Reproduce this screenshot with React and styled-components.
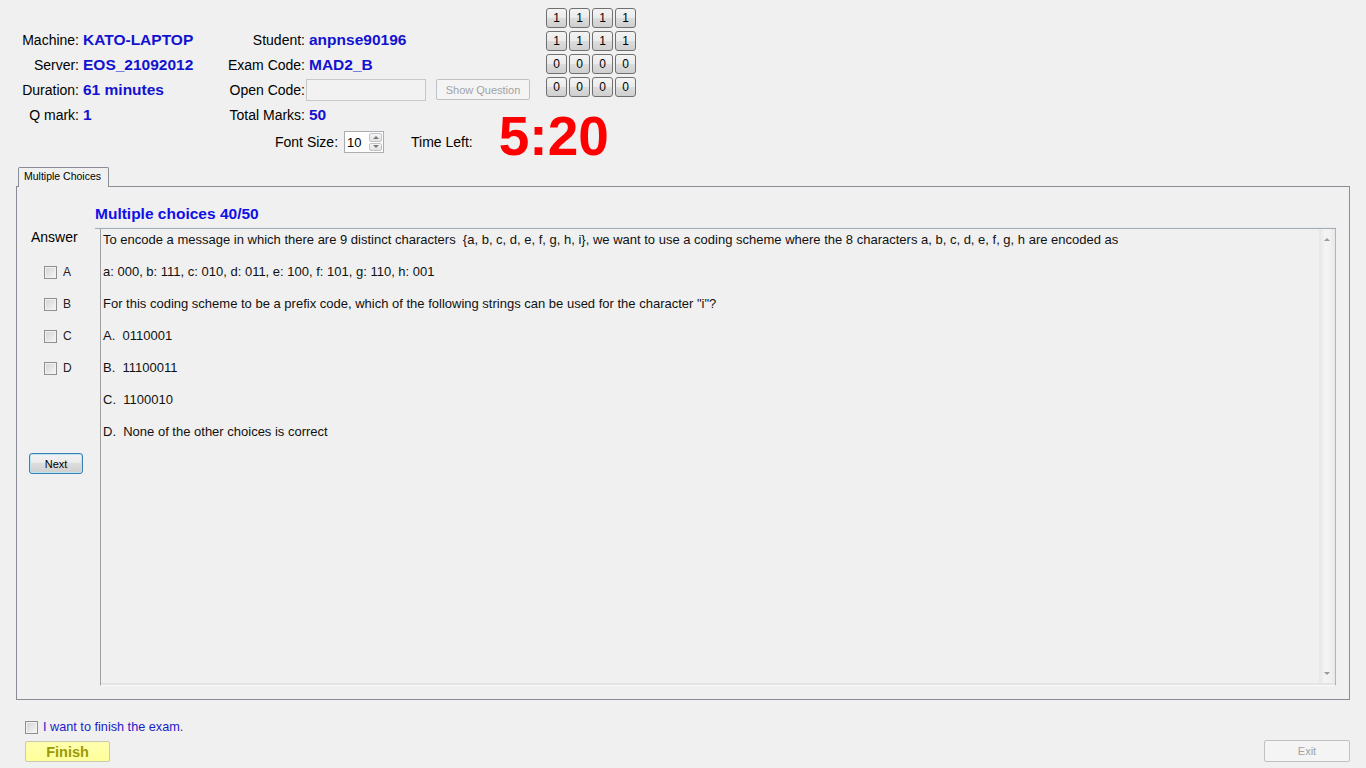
import React from "react";
import styled, { createGlobalStyle } from "styled-components";

const GlobalStyle = createGlobalStyle`
  html, body {
    margin: 0;
    padding: 0;
    background: #f0f0f0;
  }
  body {
    font-family: "Liberation Sans", Arial, sans-serif;
    color: #000;
  }
  * {
    box-sizing: border-box;
  }
`;

const Page = styled.div`
  width: 1366px;
  height: 768px;
  overflow: hidden;
  display: flex;
  flex-direction: column;
`;

/* ---------- header ---------- */

const Header = styled.div`
  display: grid;
  grid-template-columns: 546px 90px;
  grid-template-rows: 128px 28px;
  height: 166px;
`;

const InfoGrid = styled.div`
  margin-top: 27px;
  display: grid;
  grid-template-columns: 79px 142px 84px 1fr;
  grid-auto-rows: 25px;
  align-items: center;
`;

const Label = styled.div`
  text-align: right;
  font-size: 14px;
  white-space: nowrap;
`;

const Value = styled.div`
  display: flex;
  align-items: center;
  gap: 10px;
  padding-left: ${(p) => (p.$tight ? 1 : 4)}px;
  font-size: 15.5px;
  font-weight: bold;
  color: #1212d0;
  white-space: nowrap;
`;

const CodeInput = styled.div`
  width: 120px;
  height: 22px;
  border: 1px solid #c6c8cc;
  background: #f2f2f2;
`;

const GreyButton = styled.div`
  width: ${(p) => p.$w}px;
  height: ${(p) => p.$h || 21}px;
  border: 1px solid #bfc2c5;
  border-radius: 2px;
  background: #f4f4f4;
  color: #a3a3a3;
  font-size: 11px;
  font-weight: normal;
  display: flex;
  align-items: center;
  justify-content: center;
`;

const Matrix = styled.div`
  margin-top: 8px;
  display: grid;
  grid-template-columns: repeat(4, 21px);
  grid-auto-rows: 20px;
  column-gap: 2px;
  row-gap: 3px;
  align-self: start;
`;

const Cell = styled.div`
  border: 1px solid #707070;
  border-radius: 3px;
  background: linear-gradient(#f3f3f3, #ebebeb 50%, #dddddd 50%, #cfcfcf);
  font-size: 12px;
  display: flex;
  align-items: center;
  justify-content: center;
`;

const ControlRow = styled.div`
  grid-column: 1 / span 2;
  display: flex;
  align-items: center;
  padding-left: 275px;
`;

const Spinner = styled.div`
  margin-left: 6px;
  width: 40px;
  height: 22px;
  border: 1px solid #abadb3;
  background: #fff;
  display: flex;
  font-size: 13px;
`;

const SpinValue = styled.div`
  flex: 1;
  padding-left: 2px;
  display: flex;
  align-items: center;
`;

const SpinButtons = styled.div`
  width: 15px;
  display: flex;
  flex-direction: column;
  gap: 1px;
  padding: 1px;
`;

const SpinButton = styled.div`
  flex: 1;
  border: 1px solid #c2c4c8;
  border-radius: 2px;
  background: linear-gradient(#f6f6f6, #e2e2e2);
  display: flex;
  align-items: center;
  justify-content: center;
`;

const Arrow = styled.span`
  width: 0;
  height: 0;
  border-left: 3px solid transparent;
  border-right: 3px solid transparent;
  ${(p) =>
    p.$down
      ? `border-top: 3px solid ${p.$color || "#5a5a5a"};`
      : `border-bottom: 3px solid ${p.$color || "#5a5a5a"};`}
`;

const TimeLabel = styled.div`
  margin-left: 27px;
  font-size: 14px;
`;

const Timer = styled.div`
  margin-left: 26px;
  margin-bottom: 12px;
  font-size: 55px;
  line-height: 55px;
  font-weight: bold;
  color: #ff0000;
`;

/* ---------- tab panel ---------- */

const TabArea = styled.div`
  margin: 0 16px;
  display: flex;
  flex-direction: column;
`;

const TabStrip = styled.div`
  height: 20px;
  padding-left: 2px;
  display: flex;
  align-items: flex-end;
`;

const Tab = styled.div`
  position: relative;
  z-index: 1;
  width: 91px;
  height: 20px;
  margin-bottom: -1px;
  padding: 2px 0 0 5px;
  border: 1px solid #898c95;
  border-bottom: none;
  border-radius: 2px 2px 0 0;
  background: #f0f0f0;
  font-size: 10.5px;
  line-height: 13px;
`;

const Panel = styled.div`
  height: 514px;
  border: 1px solid #898c95;
  background: #f0f0f0;
  display: flex;
  flex-direction: column;
  padding: 18px 13px 0 0;
`;

const Heading = styled.div`
  margin-left: 78px;
  padding-bottom: 5px;
  line-height: 18px;
  font-size: 15.5px;
  font-weight: bold;
  color: #0f0fe6;
  border-bottom: 1px solid #a7abb0;
  box-shadow: 0 -2px 0 -1px #e3ecf5 inset;
`;

const Body = styled.div`
  height: 457px;
  display: flex;
`;

const LeftCol = styled.div`
  width: 83px;
  padding-left: 12px;
  display: flex;
  flex-direction: column;
  align-items: flex-start;
`;

const AnswerLabel = styled.div`
  margin-left: 2px;
  font-size: 14px;
  line-height: 16px;
`;

const Options = styled.div`
  margin-top: 11px;
  padding-left: 15px;
`;

const Option = styled.label`
  height: 32px;
  display: flex;
  align-items: center;
  gap: 6px;
  font-size: 12px;
  color: #222;
`;

const Box = styled.span`
  width: 13px;
  height: 13px;
  border: 1px solid #8f8f8f;
  background: linear-gradient(135deg, #d2d2d2, #f7f7f7);
  box-shadow: inset 0 0 0 1px #f2f2f2;
  flex-shrink: 0;
`;

const NextButton = styled.div`
  margin-top: 69px;
  width: 54px;
  height: 21px;
  border: 1px solid #3c7fb1;
  border-radius: 3px;
  background: linear-gradient(#f2f2f2, #ebebeb 50%, #dddddd 50%, #cfcfcf);
  box-shadow: inset 0 0 0 1px #b9e3f7;
  font-size: 11px;
  display: flex;
  align-items: center;
  justify-content: center;
`;

const TextBox = styled.div`
  flex: 1;
  display: flex;
  border-left: 1px solid #a0a0a0;
  border-right: 1px solid #b4b4b4;
  border-bottom: 1px solid #fafafa;
  box-shadow: inset 0 -2px 0 #e4e4e4;
`;

const Content = styled.div`
  flex: 1;
  padding: 3px 0 0 2px;
  font-size: 13px;
  line-height: 16px;
  color: #111;

  p {
    margin: 0 0 16px;
    white-space: pre;
  }
`;

const ScrollBar = styled.div`
  width: 16px;
  margin-bottom: 2px;
  background: linear-gradient(to right, #e6e6e6, #f4f4f4 40%, #f1f1f1 70%, #e8e8e8);
  display: flex;
  flex-direction: column;
  justify-content: space-between;
  align-items: center;
  padding: 9px 0 8px;
`;

/* ---------- footer ---------- */

const CheckRow = styled.label`
  margin-top: 19px;
  height: 16px;
  padding-left: 25px;
  display: flex;
  align-items: center;
  gap: 5px;
  font-size: 12.7px;
  color: #1c1cc8;
`;

const ButtonRow = styled.div`
  margin-top: 5px;
  padding: 0 16px 0 25px;
  display: flex;
  justify-content: space-between;
  align-items: flex-end;
`;

const FinishButton = styled.div`
  width: 85px;
  height: 21px;
  border: 1px solid #c9c9b4;
  border-radius: 2px;
  background: linear-gradient(#ffffb0, #ffff99);
  color: #9a9a06;
  font-size: 14.5px;
  font-weight: bold;
  display: flex;
  align-items: center;
  justify-content: center;
`;

const info = [
  ["Machine:", "KATO-LAPTOP", "Student:", "anpnse90196"],
  ["Server:", "EOS_21092012", "Exam Code:", "MAD2_B"],
  ["Duration:", "61 minutes", "Open Code:", null],
  ["Q mark:", "1", "Total Marks:", "50"],
];

const matrix = [
  [1, 1, 1, 1],
  [1, 1, 1, 1],
  [0, 0, 0, 0],
  [0, 0, 0, 0],
];

const question = [
  "To encode a message in which there are 9 distinct characters  {a, b, c, d, e, f, g, h, i}, we want to use a coding scheme where the 8 characters a, b, c, d, e, f, g, h are encoded as",
  "a: 000, b: 111, c: 010, d: 011, e: 100, f: 101, g: 110, h: 001",
  'For this coding scheme to be a prefix code, which of the following strings can be used for the character "i"?',
  "A.  0110001",
  "B.  11100011",
  "C.  1100010",
  "D.  None of the other choices is correct",
];

export default function App() {
  return (
    <Page>
      <GlobalStyle />
      <Header>
        <InfoGrid>
          {info.map(([l1, v1, l2, v2]) => (
            <React.Fragment key={l1}>
              <Label>{l1}</Label>
              <Value>{v1}</Value>
              <Label>{l2}</Label>
              {v2 === null ? (
                <Value $tight>
                  <CodeInput />
                  <GreyButton $w={94}>Show Question</GreyButton>
                </Value>
              ) : (
                <Value>{v2}</Value>
              )}
            </React.Fragment>
          ))}
        </InfoGrid>
        <Matrix>
          {matrix.flat().map((n, i) => (
            <Cell key={i}>{n}</Cell>
          ))}
        </Matrix>
        <ControlRow>
          <Label>Font Size:</Label>
          <Spinner>
            <SpinValue>10</SpinValue>
            <SpinButtons>
              <SpinButton>
                <Arrow $color="#7a7a7a" />
              </SpinButton>
              <SpinButton>
                <Arrow $down $color="#7a7a7a" />
              </SpinButton>
            </SpinButtons>
          </Spinner>
          <TimeLabel>Time Left:</TimeLabel>
          <Timer>5:20</Timer>
        </ControlRow>
      </Header>

      <TabArea>
        <TabStrip>
          <Tab>Multiple Choices</Tab>
        </TabStrip>
        <Panel>
          <Heading>Multiple choices 40/50</Heading>
          <Body>
            <LeftCol>
              <AnswerLabel>Answer</AnswerLabel>
              <Options>
                {["A", "B", "C", "D"].map((o) => (
                  <Option key={o}>
                    <Box />
                    {o}
                  </Option>
                ))}
              </Options>
              <NextButton>Next</NextButton>
            </LeftCol>
            <TextBox>
              <Content>
                {question.map((line, i) => (
                  <p key={i}>{line}</p>
                ))}
              </Content>
              <ScrollBar>
                <Arrow $color="#9a9a9a" />
                <Arrow $down $color="#9a9a9a" />
              </ScrollBar>
            </TextBox>
          </Body>
        </Panel>
      </TabArea>

      <CheckRow>
        <Box />I want to finish the exam.
      </CheckRow>
      <ButtonRow>
        <FinishButton>Finish</FinishButton>
        <GreyButton $w={86} $h={22}>
          Exit
        </GreyButton>
      </ButtonRow>
    </Page>
  );
}
